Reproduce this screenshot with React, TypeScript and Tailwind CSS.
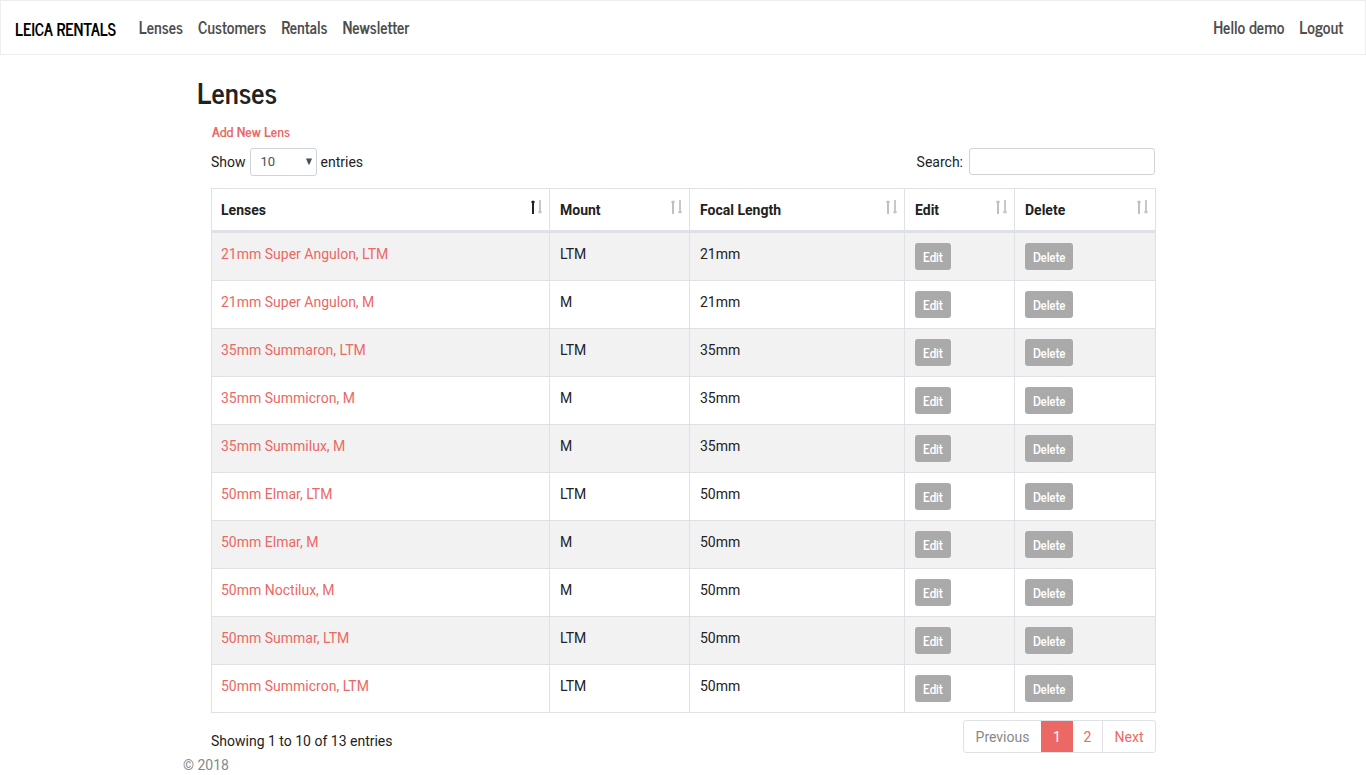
import React from "react";

const heading = "font-['News_Cycle','Roboto_Condensed','Liberation_Sans_Narrow',sans-serif]";

const lenses = [
  ["21mm Super Angulon, LTM", "LTM", "21mm"],
  ["21mm Super Angulon, M", "M", "21mm"],
  ["35mm Summaron, LTM", "LTM", "35mm"],
  ["35mm Summicron, M", "M", "35mm"],
  ["35mm Summilux, M", "M", "35mm"],
  ["50mm Elmar, LTM", "LTM", "50mm"],
  ["50mm Elmar, M", "M", "50mm"],
  ["50mm Noctilux, M", "M", "50mm"],
  ["50mm Summar, LTM", "LTM", "50mm"],
  ["50mm Summicron, LTM", "LTM", "50mm"],
];

const columns = [
  { label: "Lenses", width: "pl-[9px]" },
  { label: "Mount", width: "w-[140px] pl-[10px]" },
  { label: "Focal Length", width: "w-[215px] pl-[10px]" },
  { label: "Edit", width: "w-[110px] pl-[10px]" },
  { label: "Delete", width: "w-[141px] pl-[10px]" },
];

function SortIcon({ active }: { active: boolean }) {
  return (
    <svg className="mb-1" width="13" height="15" viewBox="0 0 13 15" shapeRendering="crispEdges" aria-hidden="true">
      <g fill={active ? "#212529" : "#c0c0c0"}>
        <path d="M2 1h2v13H2z" />
        <path d="M1 1h4v2H1z" opacity="0.6" />
        <path d="M2 0h2v1H2z" opacity="0.3" />
      </g>
      <g fill="#c8c8c8">
        <path d="M9 0h2v13H9z" />
        <path d="M8 11h4v2H8z" opacity="0.7" />
        <path d="M9 13h2v1H9z" opacity="0.4" />
      </g>
    </svg>
  );
}

function RowButton({ children }: { children: string }) {
  return (
    <button type="button" className={`${heading} block h-[27px] rounded-[3px] bg-[#aaaaaa] px-2 text-[13px] leading-[26px] font-bold text-white`}>
      {children}
    </button>
  );
}

export default function App() {
  return (
    <div className="font-[Roboto,sans-serif] text-[14px] leading-[22px] text-[#222222]">
      <nav className={`${heading} flex h-[55px] items-center border border-[#eeeeee] px-[14px] pb-[2px] text-[16px] font-bold text-[#4e4e4e]`}>
        <a href="#home" className="mt-1 mr-[23px] text-black">LEICA RENTALS</a>
        <div className="flex flex-1 gap-[15px]">
          <a href="#lenses">Lenses</a>
          <a href="#customers">Customers</a>
          <a href="#rentals">Rentals</a>
          <a href="#newsletter">Newsletter</a>
        </div>
        <div className="flex gap-[15px] pr-2">
          <a href="#account">Hello demo</a>
          <a href="#logout">Logout</a>
        </div>
      </nav>

      <div className="mx-auto max-w-[1000px]">
        <main className="px-[14px] pt-5">
          <h2 className={`${heading} text-[29px] leading-[34px] font-bold`}>Lenses</h2>
          <div className="pt-[11px] pl-[14px] pr-[13px]">
            <a href="#add" className={`${heading} block w-fit pl-px text-[14px] font-bold text-[#eb6864]`}>Add New Lens</a>
            <div className="mt-[6px] mb-3 flex items-start justify-between pr-px">
              <label className="flex items-center gap-1">
                Show
                <span className="relative">
                  <select defaultValue="10" className="h-7 w-[67px] appearance-none rounded-[3px] border border-[#ced4da] bg-white pl-[10px] text-[13px] text-[#495057]">
                    <option>10</option>
                    <option>25</option>
                    <option>50</option>
                    <option>100</option>
                  </select>
                  <svg className="pointer-events-none absolute top-[10px] right-1" width="8" height="7" viewBox="0 0 8 7" aria-hidden="true">
                    <path d="M1 0.5h6L4.5 6.5h-1z" fill="#495057" />
                  </svg>
                </span>
                entries
              </label>
              <label className="flex items-center gap-[6px]">
                Search:
                <input type="search" className="h-[27px] w-[186px] rounded-[3px] border border-[#ced4da] bg-white px-2" />
              </label>
            </div>

            <table className="w-full table-fixed border-separate border-spacing-0 border-t border-l border-[#dee2e6]">
              <thead>
                <tr>
                  {columns.map((c, i) => (
                    <th key={c.label} className={`${c.width} h-[44px] border-r border-b-3 border-[#dee2e6] pr-[6px] text-left font-bold`}>
                      <div className="flex items-center justify-between">
                        {c.label}
                        <SortIcon active={i === 0} />
                      </div>
                    </th>
                  ))}
                </tr>
              </thead>
              <tbody>
                {lenses.map(([name, mount, focal]) => (
                  <tr key={name} className="odd:bg-[#f2f2f2] [&>td]:h-12 [&>td]:border-r [&>td]:border-b [&>td]:border-[#dee2e6] [&>td]:pt-[10px] [&>td]:align-top">
                    <td className="pl-[9px]"><a href="#lens" className="text-[#eb6864]">{name}</a></td>
                    <td className="pl-[10px]">{mount}</td>
                    <td className="pl-[10px]">{focal}</td>
                    <td className="pl-[10px]"><RowButton>Edit</RowButton></td>
                    <td className="pl-[10px]"><RowButton>Delete</RowButton></td>
                  </tr>
                ))}
              </tbody>
            </table>

            <div className="flex items-start justify-between pt-[7px]">
              <p className="pt-[10px]">Showing 1 to 10 of 13 entries</p>
              <div className="flex h-[33px] overflow-hidden rounded-[3px] border border-[#dee2e6] text-[#eb6864]">
                <button type="button" className="w-[77px] text-[#888888]">Previous</button>
                <button type="button" className="-my-px w-8 bg-[#eb6864] text-white">1</button>
                <button type="button" className="w-[30px] border-r border-[#dee2e6]">2</button>
                <button type="button" className="w-[52px]">Next</button>
              </div>
            </div>
          </div>
        </main>
        <footer className="pt-px text-[#888888]">© 2018</footer>
      </div>
    </div>
  );
}
